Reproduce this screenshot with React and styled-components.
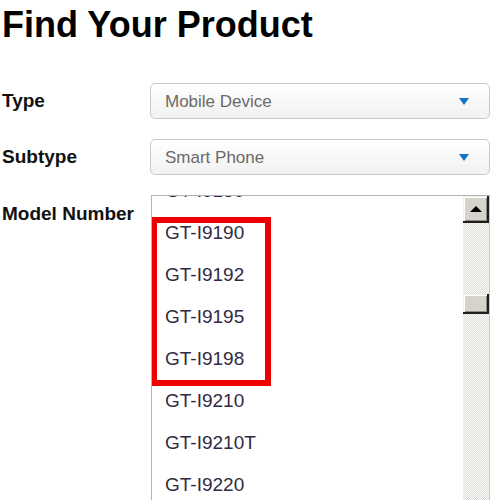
import React from "react";
import styled, { createGlobalStyle } from "styled-components";

const Global = createGlobalStyle`
  html, body { margin: 0; padding: 0; background: #fff; overflow: hidden; }
  body { font-family: "Liberation Sans", Arial, sans-serif; }
`;

const Page = styled.div`
  padding-left: 2px;
  height: 500px;
  overflow: hidden;
`;

const Title = styled.h1`
  margin: 5px 0 0;
  font-size: 36px;
  line-height: 40px;
  font-weight: bold;
  color: #000;
`;

const Form = styled.div`
  margin-top: 38px;
  display: grid;
  grid-template-columns: 148px 340px;
  row-gap: 20px;
`;

const Label = styled.div`
  font-size: 19px;
  font-weight: bold;
  color: #111;
  line-height: 22px;
  align-self: ${(p) => (p.$top ? "start" : "center")};
  padding-top: ${(p) => (p.$top ? "8px" : "0")};
`;

const Select = styled.div`
  height: 36px;
  box-sizing: border-box;
  border: 1px solid #c9c9c9;
  border-radius: 5px;
  background: linear-gradient(#ffffff, #f1f1f1);
  display: flex;
  align-items: center;
  justify-content: space-between;
  padding: 1px 20px 0 14px;
  font-size: 17px;
  color: #6a6a6a;
`;

const Arrow = styled.span`
  width: 0;
  height: 0;
  border-left: 5px solid transparent;
  border-right: 5px solid transparent;
  border-top: 7px solid #1570c0;
`;

const ListBox = styled.div`
  height: 320px;
  margin-left: 1px;
  border-top: 1px solid #b4b4b4;
  border-left: 1px solid #b4b4b4;
  display: flex;
  position: relative;
  overflow: hidden;
`;

const ListViewport = styled.div`
  flex: 1;
  overflow: hidden;
`;

const ListInner = styled.ul`
  list-style: none;
  margin: -26px 0 0;
  padding: 0;
`;

const Item = styled.li`
  height: 42px;
  line-height: 42px;
  padding-left: 13px;
  font-size: 19px;
  color: #322a45;
`;

const Scrollbar = styled.div`
  width: 27px;
  display: flex;
  flex-direction: column;
  border-right: 1px solid #c8c8c8;
  box-sizing: border-box;
`;

const Bevel = styled.div`
  box-sizing: border-box;
  background: #d6d3cc;
  box-shadow: inset -2px -2px 0 #1e1e1e, inset 1px 1px 0 #f0efec, inset 2px 2px 0 #ffffff,
    inset -3px -3px 0 #8d8a84;
  display: flex;
  align-items: center;
  justify-content: center;
`;

const UpButton = styled(Bevel)`
  height: 27px;
  flex: none;
`;

const UpTri = styled.span`
  width: 0;
  height: 0;
  border-left: 6px solid transparent;
  border-right: 6px solid transparent;
  border-bottom: 6px solid #000;
  margin-bottom: 2px;
`;

const Track = styled.div`
  flex: 1;
  background-color: #ffffff;
  background-image: repeating-conic-gradient(#dcd9d3 0% 25%, #ffffff 0% 50%);
  background-size: 2px 2px;
  display: flex;
  flex-direction: column;
`;

const Thumb = styled(Bevel)`
  height: 20px;
  margin-top: 71px;
  flex: none;
`;

const Highlight = styled.div`
  position: absolute;
  left: -1px;
  top: 21px;
  width: 120px;
  height: 169px;
  box-sizing: border-box;
  border: 6px solid #ee0000;
  pointer-events: none;
`;

const models = [
  "GT-I9180",
  "GT-I9190",
  "GT-I9192",
  "GT-I9195",
  "GT-I9198",
  "GT-I9210",
  "GT-I9210T",
  "GT-I9220",
  "GT-I9228",
];

export default function App() {
  return (
    <Page>
      <Global />
      <Title>Find Your Product</Title>
      <Form>
        <Label>Type</Label>
        <Select>
          <span>Mobile Device</span>
          <Arrow />
        </Select>
        <Label>Subtype</Label>
        <Select>
          <span>Smart Phone</span>
          <Arrow />
        </Select>
        <Label $top>Model Number</Label>
        <ListBox>
          <ListViewport>
            <ListInner>
              {models.map((m) => (
                <Item key={m}>{m}</Item>
              ))}
            </ListInner>
          </ListViewport>
          <Scrollbar>
            <UpButton>
              <UpTri />
            </UpButton>
            <Track>
              <Thumb />
            </Track>
          </Scrollbar>
          <Highlight />
        </ListBox>
      </Form>
    </Page>
  );
}
